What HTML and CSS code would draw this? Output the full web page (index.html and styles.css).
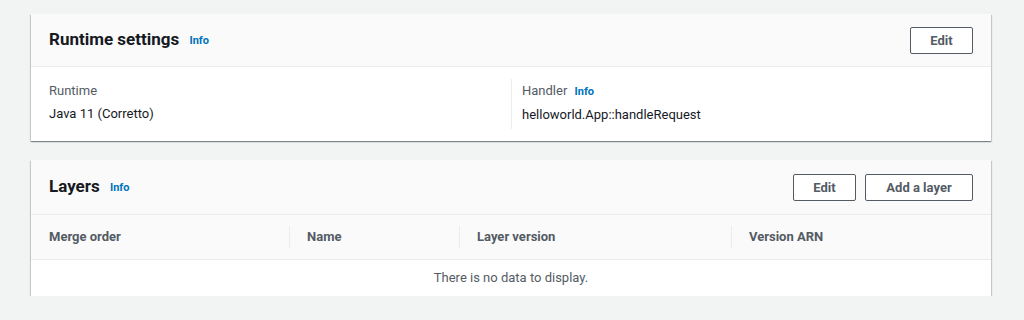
FILE: index.html
```html
<!DOCTYPE html>
<html lang="en">
<head>
    <meta charset="UTF-8">
    <title>Function configuration</title>
    <link rel="stylesheet" href="styles.css">
</head>
<body>
    <div class="pagina">
        <section class="card">
            <div class="card-header">
                <h2>Runtime settings <a href="#" class="info">Info</a></h2>
                <div class="acoes">
                    <button type="button" class="btn btn-edit">Edit</button>
                </div>
            </div>
            <div class="card-body colunas">
                <div class="coluna">
                    <div class="rotulo">Runtime</div>
                    <div class="valor">Java 11 (Corretto)</div>
                </div>
                <div class="coluna">
                    <div class="rotulo">Handler <a href="#" class="info">Info</a></div>
                    <div class="valor">helloworld.App::handleRequest</div>
                </div>
            </div>
        </section>

        <section class="card">
            <div class="card-header header-alto">
                <h2>Layers <a href="#" class="info">Info</a></h2>
                <div class="acoes">
                    <button type="button" class="btn btn-edit">Edit</button>
                    <button type="button" class="btn btn-add">Add a layer</button>
                </div>
            </div>
            <table class="tabela">
                <thead>
                    <tr>
                        <th class="col-ordem">Merge order</th>
                        <th class="col-nome">Name</th>
                        <th class="col-versao">Layer version</th>
                        <th class="col-arn">Version ARN</th>
                    </tr>
                </thead>
                <tbody>
                    <tr>
                        <td colspan="4" class="vazio">There is no data to display.</td>
                    </tr>
                </tbody>
            </table>
        </section>
    </div>
</body>
</html>
```

FILE: styles.css
```css
:root {
    --cor-fundo: #f2f3f3;
    --cor-card: #ffffff;
    --cor-cabecalho: #fafafa;
    --cor-texto: #16191f;
    --cor-secundaria: #545b64;
    --cor-link: #0073bb;
    --cor-borda: #eaeded;
    --sombra-card: 0 1px 1px 0 rgba(0, 28, 36, 0.3), 1px 1px 1px 0 rgba(0, 28, 36, 0.15), -1px 1px 1px 0 rgba(0, 28, 36, 0.15);
}
* { box-sizing: border-box; margin: 0; padding: 0; }
body {
    font-family: Roboto, 'Liberation Sans', Arial, sans-serif;
    background-color: var(--cor-fundo);
    color: var(--cor-texto);
    font-size: 13px;
    line-height: 20px;
}
.pagina { padding: 14px 33px 0 31px; display: flex; flex-direction: column; gap: 19px; }
.card { background-color: var(--cor-card); box-shadow: var(--sombra-card); }
.card-header {
    display: flex; align-items: center; justify-content: space-between;
    background-color: var(--cor-cabecalho); border-bottom: 1px solid var(--cor-borda);
    padding: 12px 18px 12px 18px; height: 53px;
}
.header-alto { height: 55px; padding-top: 13px; padding-bottom: 13px; }
.card-header h2 { font-size: 17px; font-weight: 700; line-height: 22px; color: var(--cor-texto); }
.info {
    color: var(--cor-link); font-size: 11px; font-weight: 700; text-decoration: none;
    margin-left: 6px; vertical-align: 1px;
}
.acoes { display: flex; gap: 9px; }
.btn {
    height: 27px; border: 1px solid var(--cor-secundaria); border-radius: 2px;
    background-color: #fff; color: var(--cor-secundaria); font-family: inherit;
    font-size: 13px; font-weight: 700; cursor: pointer;
}
.btn-edit { width: 63px; }
.btn-add { width: 108px; }
.colunas { display: grid; grid-template-columns: 1fr 1fr; padding: 12px 0 12px 0; }
.coluna { padding: 2px 18px 4px 18px; }
.coluna + .coluna { border-left: 1px solid var(--cor-borda); padding-left: 10px; }
.rotulo { color: var(--cor-secundaria); margin-bottom: 3px; }
.rotulo .info { margin-left: 4px; vertical-align: 0; }
.valor { color: var(--cor-texto); }
.tabela { width: 100%; border-collapse: collapse; }
.tabela th {
    background-color: var(--cor-cabecalho); color: var(--cor-secundaria); font-size: 13px;
    font-weight: 700; text-align: left; height: 44px; padding: 0 18px; position: relative;
    border-bottom: 1px solid var(--cor-borda);
}
.tabela th + th::before {
    content: ""; position: absolute; left: 0; top: 11px; bottom: 11px;
    border-left: 1px solid var(--cor-borda);
}
.col-ordem { width: 258px; }
.col-nome { width: 170px; }
.col-versao { width: 272px; }
.vazio { text-align: center; color: var(--cor-secundaria); height: 37px; }
```
